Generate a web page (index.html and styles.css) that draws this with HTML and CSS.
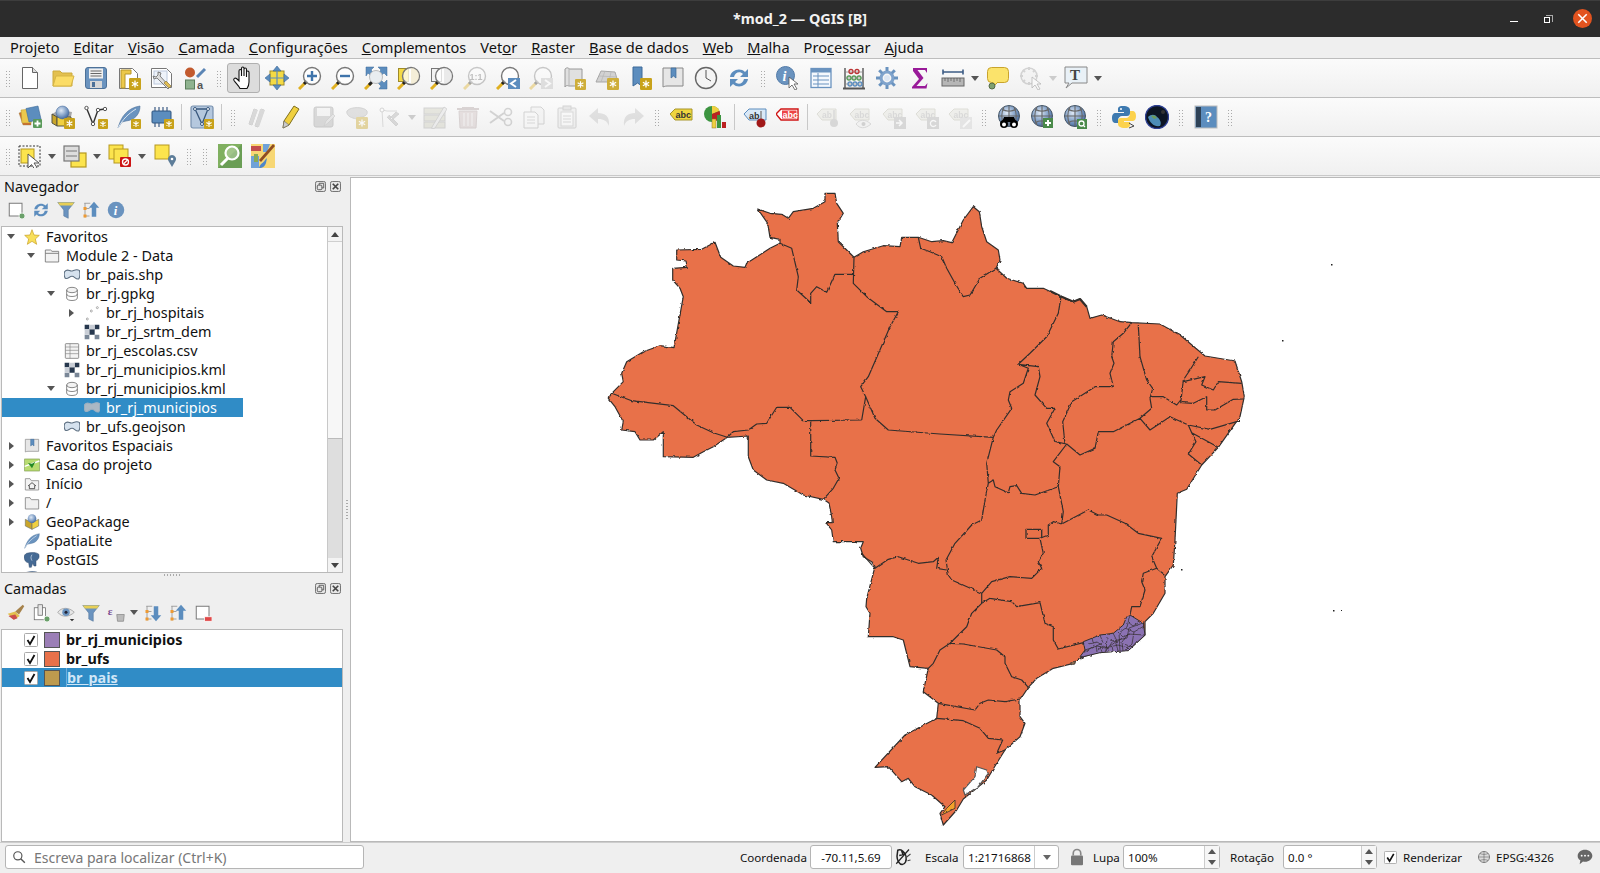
FILE: index.html
```html
<!DOCTYPE html>
<html lang="pt">
<head>
<meta charset="utf-8">
<title>*mod_2 — QGIS [B]</title>
<link rel="stylesheet" href="styles.css">
</head>
<body>
<svg class="defs" aria-hidden="true">
<defs>
<radialGradient id="gl" cx=".4" cy=".35" r=".7"><stop offset="0" stop-color="#dfe9f5"/><stop offset=".6" stop-color="#7d9cc4"/><stop offset="1" stop-color="#3d6299"/></radialGradient>
<filter id="rough" x="590" y="180" width="680" height="660" filterUnits="userSpaceOnUse"><feTurbulence type="fractalNoise" baseFrequency=".22" numOctaves="2" seed="4"/><feDisplacementMap in="SourceGraphic" scale="2.6" xChannelSelector="R" yChannelSelector="G"/></filter>
</defs>
<symbol id="bd" viewBox="0 0 10 10"><rect width="10" height="10" rx="1" fill="#c8a21a"/><path d="M5 2v6M2.4 3.5l5.2 3M2.4 6.5l5.2-3" stroke="#fff" stroke-width="1.1"/></symbol>
<symbol id="lens" viewBox="0 0 24 24"><path d="M1 23l7-7" stroke="#e0b020" stroke-width="3"/><path d="M6 18l3-3" stroke="#222" stroke-width="3"/><circle cx="14" cy="10" r="8.5" fill="#fff" fill-opacity=".75" stroke="#777" stroke-width="1.4"/></symbol>
<symbol id="new" viewBox="0 0 24 24"><path d="M4.5 1.5h10l5 5v16h-15z" fill="#fff" stroke="#666"/><path d="M14.5 1.5v5h5" fill="#ddd" stroke="#666"/></symbol>
<symbol id="open" viewBox="0 0 24 24"><path d="M2 20V5h7l2 2h10v13z" fill="#e3c04f" stroke="#cdaa3d"/><path d="M2 20l3-10h18l-3 10z" fill="#fbdc66" stroke="#d6b545"/></symbol>
<symbol id="save" viewBox="0 0 24 24"><rect x="1.5" y="1.5" width="21" height="21" rx="2.5" fill="#6a93bf" stroke="#4d7198"/><rect x="5" y="2.5" width="14" height="10" fill="#f0f0f0"/><path d="M6.5 5h11M6.5 7.5h11M6.5 10h11" stroke="#666"/><rect x="6" y="15" width="12" height="7" fill="#d8d8d8"/><rect x="8" y="16" width="3" height="5" fill="#4d7198"/></symbol>
<symbol id="layoutnew" viewBox="0 0 24 24"><path d="M2.5 2.5h13l5 5v15h-18z" fill="#fff" stroke="#777"/><path d="M4 4h10v4H8v14H4z" fill="#ecc94b" stroke="#b8962a"/><use href="#bd" x="12" y="12" width="12" height="12"/></symbol>
<symbol id="layoutmgr" viewBox="0 0 24 24"><path d="M1.5 2.5h15l5 5v14h-20z" fill="#fff" stroke="#777"/><rect x="4" y="5" width="13" height="13" fill="#eef3fa" stroke="#bcc8dc"/><path d="M8 6l3 1-1 3 10 11-2 2L7 12l-3 1-1-3 3 1 2-2z" fill="#ddd" stroke="#666" stroke-width=".8"/><path d="M14 17l5 5 2-2-5-5z" fill="#e2bd53" stroke="#8e7a3b" stroke-width=".7"/></symbol>
<symbol id="style" viewBox="0 0 24 24"><circle cx="7" cy="6.5" r="5" fill="#c25a2e"/><path d="M14 11L22 3" stroke="#5b85b5" stroke-width="3"/><rect x="2.5" y="14" width="9" height="9" fill="#8fb38f" stroke="#5a7d5a"/></symbol>
<symbol id="hand" viewBox="0 0 24 24"><path d="M8 22.5c-1-2.5-3.500-4.500-6-8-1-2 1-3 2.500-2l2.500 2.500V5c0-2 2.500-2 2.500 0v5V2.500c0-2 2.500-2 2.500 0V10V3.500c0-2 2.500-2 2.500 0V11V6.500c0-2 2.500-2 2.500 0V16c0 3-1 5-2 6.500z" fill="#fff" stroke="#111" stroke-width="1.100"/></symbol>
<symbol id="pan" viewBox="0 0 24 24"><rect x="5" y="5" width="14" height="14" fill="#f4da45" stroke="#9e8a2a"/><path d="M12 0l4 5H8zM12 24l-4-5h8zM0 12l5-4v8zM24 12l-5 4V8z" fill="#5c8dbe" stroke="#3d6a99" stroke-width=".6"/><path d="M12 5v14M5 12h14" stroke="#5c8dbe" stroke-width="1.200"/></symbol>
<symbol id="zin" viewBox="0 0 24 24"><use href="#lens"/><path d="M14 5v10M9 10h10" stroke="#3f74ab" stroke-width="2.400"/></symbol>
<symbol id="zout" viewBox="0 0 24 24"><use href="#lens"/><path d="M9 10h10" stroke="#3f74ab" stroke-width="2.400"/></symbol>
<symbol id="zfull" viewBox="0 0 24 24"><path d="M2 1h8L7 4l3 3-3 3-3-3-2 3zM23 1v9l-3-3-3 3-3-3 3-3-3-3zM23 23h-8l2-3-3-3 3-3 3 3 3-3z" fill="#5c8dbe" stroke="#3d6a99" stroke-width=".5"/><path d="M1 23l6-6" stroke="#e0b020" stroke-width="3"/><path d="M5 19l3-3" stroke="#222" stroke-width="3"/><circle cx="12" cy="11" r="6.500" fill="#e9edf0" stroke="#bbb"/></symbol>
<symbol id="zsel" viewBox="0 0 24 24"><rect x="1.500" y="2.500" width="10" height="13" fill="#f4da45" stroke="#9e8a2a"/><use href="#lens"/><path d="M14 2v16a8 8 0 0 0 0-16z" fill="#eee5c0" fill-opacity=".6"/></symbol>
<symbol id="zlay" viewBox="0 0 24 24"><rect x="1.500" y="2.500" width="10" height="13" fill="#f2f2f2" stroke="#777"/><use href="#lens"/><path d="M14 2v16a8 8 0 0 0 0-16z" fill="#ddd" fill-opacity=".6"/></symbol>
<symbol id="zlast" viewBox="0 0 24 24"><use href="#lens"/><rect x="12" y="12" width="12" height="11" fill="#5c8dbe"/><path d="M20 14l-5 3.500 5 3.500" fill="none" stroke="#fff" stroke-width="2"/></symbol>
<symbol id="znext" viewBox="0 0 24 24"><use href="#lens"/><rect x="12" y="12" width="12" height="11" fill="#bbb"/><path d="M16 14l5 3.500-5 3.500" fill="none" stroke="#fff" stroke-width="2"/></symbol>
<symbol id="map" viewBox="0 0 24 24"><path d="M3 3c2-2 4-1 4 0h13v17H7c-2-1-4 0-4 1z" fill="#ddd" stroke="#888"/><path d="M7 3v17" stroke="#aaa"/></symbol>
<symbol id="mapn" viewBox="0 0 24 24"><use href="#map"/><use href="#bd" x="13" y="13" width="11" height="11"/></symbol>
<symbol id="map3d" viewBox="0 0 24 24"><path d="M1 16L6 5l14 1 3 10z" fill="#ccc" stroke="#999"/><path d="M4 10l18 1M10 5l-4 11M16 6l-2 10" stroke="#aaa" stroke-width=".7"/><use href="#bd" x="12" y="12" width="12" height="12"/></symbol>
<symbol id="bmn" viewBox="0 0 24 24"><path d="M5 1h9v19l-4.500-3L5 20z" fill="#5c8dbe" stroke="#3d6a99"/><use href="#bd" x="12" y="12" width="12" height="12"/></symbol>
<symbol id="bms" viewBox="0 0 24 24"><path d="M2 2h20v18H6c-2 0-4 1-4 1z" fill="#e6e6e6" stroke="#888"/><path d="M10 2h5v10l-2.500-2L10 12z" fill="#5c8dbe" stroke="#3d6a99" stroke-width=".7"/></symbol>
<symbol id="clock" viewBox="0 0 24 24"><circle cx="12" cy="12" r="10.500" fill="#f4f4f4" stroke="#666" stroke-width="1.400"/><path d="M12 4v8l5 3" fill="none" stroke="#555"/></symbol>
<symbol id="refr" viewBox="0 0 24 24"><path d="M3 11C4 4 13 1 18 6l3-3v8h-8l3-3c-3-3-8-2-9 3z" fill="#5c8dbe"/><path d="M21 13c-1 7-10 10-15 5l-3 3v-8h8l-3 3c3 3 8 2 9-3z" fill="#5c8dbe"/></symbol>
<symbol id="ident" viewBox="0 0 24 24"><circle cx="9.500" cy="9.500" r="9" fill="#6a93bf" stroke="#527ba8"/></symbol>
<symbol id="cursor" viewBox="0 0 24 24"><path d="M13 11v11l3-3 3 5 2-1-3-5h4z" fill="#fff" stroke="#555" stroke-width=".8"/></symbol>
<symbol id="attr" viewBox="0 0 24 24"><rect x="2" y="2.500" width="20" height="19" fill="#f4f8fd" stroke="#6a93bf" stroke-width="1.300"/><rect x="2" y="2.500" width="20" height="4" fill="#6a93bf"/><path d="M4 10h16M4 14h16M4 18h16M9 7v14" stroke="#6a93bf"/></symbol>
<symbol id="calc" viewBox="0 0 24 24"><path d="M3 2v20M21 2v20" stroke="#555" stroke-width="1.400"/><path d="M1 22.500h22" stroke="#555" stroke-width="2"/><path d="M3 6h18M3 12h18M3 18h18" stroke="#888" stroke-width=".8"/><g fill="none" stroke-width="1.300"><g stroke="#b33"><circle cx="9" cy="5.500" r="2"/><circle cx="15" cy="5.500" r="2"/></g><g stroke="#5a9a5a"><circle cx="7" cy="12" r="2"/><circle cx="12" cy="12" r="2"/><circle cx="17" cy="12" r="2"/></g><g stroke="#5c8dbe"><circle cx="8" cy="18" r="2"/><circle cx="13" cy="18" r="2"/><circle cx="18" cy="18" r="2"/></g></g></symbol>
<symbol id="gear" viewBox="0 0 24 24"><circle cx="12" cy="12" r="6" fill="none" stroke="#7fa3cc" stroke-width="3.200"/><path d="M12 1v4M12 19v4M1 12h4M19 12h4M4.200 4.200l3 3M16.800 16.800l3 3M19.800 4.200l-3 3M7.200 16.800l-3 3" stroke="#6a93bf" stroke-width="3"/><circle cx="12" cy="12" r="3" fill="#dde7f3"/></symbol>
<symbol id="sigma" viewBox="0 0 24 24"><path d="M5 2h14v5l-2-3H9.500l6 8-7 8H17l2.500-3-1 5.500H4v-1.500l7-8-6-8z" fill="#991a99"/></symbol>
<symbol id="ruler" viewBox="0 0 24 24"><path d="M2 6h20M2 3.500v5M22 3.500v5" stroke="#3d5c85" stroke-width="1.600"/><rect x="1" y="12" width="22" height="8" fill="#b6b6b6" stroke="#666"/><path d="M4 12v3M7 12v4M10 12v3M13 12v4M16 12v3M19 12v4" stroke="#555" stroke-width=".7"/></symbol>
<symbol id="tip" viewBox="0 0 24 24"><rect x="1.500" y="1.500" width="21" height="15" rx="4" fill="#fbe36b" stroke="#c9a42c"/><path d="M7 16v5l5-5" fill="#fbe36b" stroke="#c9a42c"/><circle cx="6" cy="20" r="3" fill="#7fa070" stroke="#556b48"/></symbol>
<symbol id="maptip" viewBox="0 0 24 24"><circle cx="10" cy="10" r="8" fill="#eee" stroke="#999" stroke-width="1.500"/><path d="M10 1v3M10 16v3M1 10h3M16 10h3M4 4l2 2M14 14l2 2M16 4l-2 2M4 16l2-2" stroke="#999" stroke-width="2"/><use href="#cursor"/></symbol>
<symbol id="tbub" viewBox="0 0 24 24"><path d="M1 1h22v16H8l-6 5 3-5H1z" fill="#e9f1f7" stroke="#888"/></symbol>
<symbol id="dsm" viewBox="0 0 24 24"><path d="M1 8l12-4v16H5z" fill="#cd6a32" stroke="#984" stroke-width=".4"/><path d="M3 5l10-1v14H4z" fill="#ecc84c" stroke="#b8962a" stroke-width=".5"/><path d="M8 3.500L20 1l3 13-12 3z" fill="#5c8dbe" stroke="#3d6a99" stroke-width=".6"/><rect x="15" y="14" width="9" height="9" rx="1" fill="#5a9a5a"/><path d="M19.500 15.500v6M16.500 18.500h6" stroke="#fff" stroke-width="1.800"/></symbol>
<symbol id="gpkg" viewBox="0 0 24 24"><path d="M1 9l5 3v9l-5-3z" fill="#c9a52a" stroke="#554"/><path d="M6 12h14v9H6z" fill="#f0d040" stroke="#554"/><path d="M1 9l7-4 13 2-1 5H6z" fill="#333" fill-opacity=".4"/><circle cx="11.500" cy="7.500" r="6.500" fill="url(#gl)" stroke="#3d6299" stroke-width=".5"/><use href="#bd" x="13" y="13" width="11" height="11"/></symbol>
<symbol id="gpkg2" viewBox="0 0 24 24"><path d="M2 8l10 5v10l-10-5z" fill="#c9a52a" stroke="#776"/><path d="M12 13l10-5v10l-10 5z" fill="#f0d040" stroke="#776"/><circle cx="12" cy="7" r="6.500" fill="url(#gl)"/></symbol>
<symbol id="vshp" viewBox="0 0 24 24"><path d="M2.500 3L9 19l5-14 7-1" fill="none" stroke="#333" stroke-width="1.400"/><g fill="#fff" stroke="#555"><circle cx="2.500" cy="3" r="1.700"/><circle cx="9" cy="19" r="1.700"/><circle cx="14" cy="5" r="1.700"/><circle cx="21" cy="4" r="1.700"/></g><use href="#bd" x="14" y="14" width="10" height="10"/></symbol>
<symbol id="feath" viewBox="0 0 24 24"><path d="M1 23C4 12 10 3 23 1c0 8-5 14-14 15l-4 1z" fill="#6a93bf" stroke="#4d7198" stroke-width=".6"/><path d="M1 23C6 14 11 9 19 4" fill="none" stroke="#dbe6f2"/></symbol>
<symbol id="feathn" viewBox="0 0 24 24"><use href="#feath"/><use href="#bd" x="14" y="14" width="10" height="10"/></symbol>
<symbol id="chip" viewBox="0 0 24 24"><rect x="2" y="6" width="19" height="12" rx="1" fill="#5c8dbe" stroke="#2f557f"/><path d="M5 2v4M9 2v4M13 2v4M17 2v4M5 18v4M9 18v4" stroke="#3d5c85" stroke-width="1.200"/><use href="#bd" x="14" y="14" width="10" height="10"/></symbol>
<symbol id="virt" viewBox="0 0 24 24"><rect x="1" y="1" width="22" height="22" rx="2" fill="#b5c8de" stroke="#7790ae" stroke-width="1.200"/><path d="M5 4l7 15 6-15z" fill="none" stroke="#39587d" stroke-width="1.300"/><g fill="#fff" stroke="#39587d"><circle cx="5" cy="4" r="1.500"/><circle cx="18" cy="4" r="1.500"/><circle cx="12" cy="19" r="1.500"/></g><use href="#bd" x="14" y="14" width="10" height="10"/></symbol>
<symbol id="pens" viewBox="0 0 24 24"><path d="M3 19L8 4l3 1-5 15zM9 21l6-17 3 1-6 17z" fill="#aaa" stroke="#888"/><path d="M3 19L8 4l4 1-6 15zM9 21l5-17 5 1-6 17z" fill="#aaa"/></symbol>
<symbol id="pen" viewBox="0 0 24 24"><path d="M5 16L15 1l5 3L10 20l-6 3z" fill="#f0d040" stroke="#7f6f1c"/><path d="M4 23l1-7 5 4z" fill="#ccc" stroke="#666" stroke-width=".6"/></symbol>
<symbol id="saved" viewBox="0 0 24 24"><rect x="2" y="2" width="19" height="20" rx="2" fill="#aaa" stroke="#888"/><rect x="5" y="3" width="13" height="8" fill="#eee"/><path d="M12 21l2-5 7-7 2 2-7 7z" fill="#ccc" stroke="#888" stroke-width=".6"/></symbol>
<symbol id="delpoly" viewBox="0 0 24 24"><path d="M2 6c4-5 18-4 20 0 1 4-2 5-5 6-4 0-5 3-9 1C4 12 1 9 2 6z" fill="#bbb" stroke="#999"/><use href="#bd" x="11" y="12" width="12" height="12"/></symbol>
<symbol id="vtool" viewBox="0 0 24 24"><path d="M4 5l5 1h10M4 5l1 17" fill="none" stroke="#aaa"/><circle cx="4" cy="5" r="2" fill="#fff" stroke="#999"/><path d="M9 12l9 9 2-2-9-9M21 9l-7 6-2-2 6-6z" fill="#aaa" stroke="#888" stroke-width=".7"/></symbol>
<symbol id="editt" viewBox="0 0 24 24"><rect x="1" y="3" width="21" height="6" fill="#c9c9b6" stroke="#999"/><rect x="1" y="10" width="21" height="6" fill="#c9c9b6" stroke="#999"/><rect x="1" y="17" width="21" height="6" fill="#c9c9b6" stroke="#999"/><path d="M9 22L21 2l3 2L12 23l-3 1z" fill="#ddd" stroke="#888" stroke-width=".7"/></symbol>
<symbol id="trash" viewBox="0 0 24 24"><path d="M1 4h22M6 3h12" stroke="#a89898" stroke-width="2"/><path d="M3 6h18l-1 17H4z" fill="#c8b8b8" stroke="#a89898"/><path d="M8 8v13M12 8v13M16 8v13" stroke="#eee"/></symbol>
<symbol id="cut" viewBox="0 0 24 24"><path d="M1 6l14 10M1 18L15 8" stroke="#999" stroke-width="2"/><circle cx="19" cy="7" r="3.500" fill="none" stroke="#999" stroke-width="1.600"/><circle cx="19" cy="17" r="3.500" fill="none" stroke="#999" stroke-width="1.600"/></symbol>
<symbol id="copy" viewBox="0 0 24 24"><path d="M9 2h10l3 3v14H9z" fill="#eee" stroke="#999"/><path d="M2 7h11l3 3v13H2z" fill="#f8f8f8" stroke="#999"/><path d="M5 12h8M5 15h8M5 18h8" stroke="#aaa"/></symbol>
<symbol id="paste" viewBox="0 0 24 24"><rect x="3" y="3" width="18" height="20" rx="1" fill="#e5e5e5" stroke="#999"/><rect x="8" y="1" width="8" height="4" fill="#ccc" stroke="#999"/><rect x="6" y="7" width="12" height="14" fill="#fafafa" stroke="#aaa"/><path d="M8 11h8M8 14h8M8 17h8" stroke="#aaa"/></symbol>
<symbol id="undo" viewBox="0 0 24 24"><path d="M10 3v5c7 0 12 3 11 13-2-5-5-7-11-7v5L1 11z" fill="#bbb"/></symbol>
<symbol id="redo" viewBox="0 0 24 24"><path d="M14 3v5C7 8 2 11 3 21c2-5 5-7 11-7v5l9-8z" fill="#bbb"/></symbol>
<symbol id="lab" viewBox="0 0 24 24"><path d="M0 9l5-5h17v11H5z" fill="#efd53f" stroke="#a7952d"/></symbol>
<symbol id="pie" viewBox="0 0 24 24"><circle cx="9" cy="9" r="8" fill="#3c9440"/><path d="M9 9V1a8 8 0 0 1 7.500 5z" fill="#f0d040"/><path d="M9 9l7.500-3A8 8 0 0 1 9 17z" fill="#b22"/><rect x="9" y="14" width="4" height="9" fill="#f0d040" stroke="#873" stroke-width=".5"/><rect x="14" y="10" width="4" height="13" fill="#3c9440"/><rect x="19" y="17" width="4" height="6" fill="#b22"/></symbol>
<symbol id="labp" viewBox="0 0 24 24"><path d="M1 9l5-5h17v11H6z" fill="#d9e8f7" stroke="#5c8dbe"/><path d="M18 6v10" stroke="#888" stroke-width="1.500"/><circle cx="18" cy="18" r="4.500" fill="#a01818"/></symbol>
<symbol id="labr" viewBox="0 0 24 24"><path d="M0 9l5-5h17v11H5z" fill="#fff" stroke="#d01414" stroke-width="1.400"/><rect x="6" y="5.500" width="14.500" height="8" fill="#e44"/></symbol>
<symbol id="lgt" viewBox="0 0 24 24"><path d="M1 9l5-5h14v11H6z" fill="#e2e2d8" stroke="#b5b5a5"/></symbol>
<symbol id="lg1" viewBox="0 0 24 24"><use href="#lgt"/><path d="M18 5v11" stroke="#aaa" stroke-width="1.500"/><circle cx="18" cy="18" r="4" fill="#aaa"/></symbol>
<symbol id="lg2" viewBox="0 0 24 24"><use href="#lgt"/><path d="M7 19c4-5 9-5 15 0-6 5-11 5-15 0z" fill="#eee" stroke="#aaa"/><circle cx="14.500" cy="19" r="2" fill="#999"/></symbol>
<symbol id="lg3" viewBox="0 0 24 24"><use href="#lgt"/><rect x="12" y="12" width="12" height="12" fill="#aaa"/><path d="M14 18h5M17 15l3 3-3 3" fill="none" stroke="#fff" stroke-width="1.500"/></symbol>
<symbol id="lg4" viewBox="0 0 24 24"><use href="#lgt"/><rect x="12" y="12" width="12" height="12" fill="#aaa"/><path d="M21 17a3 3 0 1 0 0 3" fill="none" stroke="#fff" stroke-width="1.300"/></symbol>
<symbol id="lg5" viewBox="0 0 24 24"><use href="#lgt"/><rect x="12" y="12" width="12" height="12" fill="#ccc"/><path d="M15 22l7-7" stroke="#fff" stroke-width="2"/></symbol>
<symbol id="glob" viewBox="0 0 24 24"><circle cx="12" cy="11" r="10.500" fill="url(#gl)" stroke="#456"/><path d="M2 11h20M12 1v20M5 4c4 3 10 3 14 0M5 18c4-3 10-3 14 0M7 2c-3 6-3 12 0 18M17 2c3 6 3 12 0 18" fill="none" stroke="#666" stroke-width="1.100"/></symbol>
<symbol id="globb" viewBox="0 0 24 24"><use href="#glob"/><g fill="#000"><circle cx="7" cy="19" r="4"/><circle cx="17" cy="19" r="4"/><path d="M7 12h10l2 5H5z"/></g><circle cx="7" cy="19.500" r="2" fill="#fff"/><circle cx="17" cy="19.500" r="2" fill="#fff"/></symbol>
<symbol id="globa" viewBox="0 0 24 24"><use href="#glob"/><rect x="13" y="13" width="10" height="10" fill="#4a8a4a"/><path d="M18 15v6M15 18h6" stroke="#fff" stroke-width="2"/></symbol>
<symbol id="globs" viewBox="0 0 24 24"><use href="#glob"/><rect x="14" y="14" width="10" height="10" fill="#4a8a4a"/><circle cx="18.500" cy="18.500" r="2.500" fill="none" stroke="#fff" stroke-width="1.300"/><path d="M20 20l2 2" stroke="#fff" stroke-width="1.300"/></symbol>
<symbol id="py" viewBox="0 0 24 24"><path d="M11 1C6 1 6 3 6 5v2h6v1H4C1 8 0 10 0 13s1 5 4 5h2v-3c0-2 2-4 4-4h5c2 0 3-1 3-3V5c0-2-2-4-7-4z" fill="#3e7ab0"/><path d="M13 23c5 0 5-2 5-4v-2h-6v-1h8c3 0 4-2 4-5s-1-5-4-5h-2v3c0 2-2 4-4 4H9c-2 0-3 1-3 3v3c0 2 2 4 7 4z" fill="#fcd24c"/><circle cx="9" cy="4" r="1" fill="#fff"/><path d="M17 18l5 3-5 2" fill="none" stroke="#444"/></symbol>
<symbol id="earth" viewBox="0 0 24 24"><circle cx="12" cy="12" r="11.500" fill="#0c1524" stroke="#2d3f92" stroke-width="1.400"/><path d="M3 12c3-3 7-3 9 0 3 2 5 6 3 9-6 1-10-3-12-9z" fill="#4c8db6"/><path d="M6 11c3-1 5 0 6 2l-3 1z" fill="#6a9a5a"/><circle cx="18" cy="7" r="2" fill="#333"/></symbol>
<symbol id="helpb" viewBox="0 0 24 24"><rect x="1" y="1" width="22" height="22" fill="#5c8dbe" stroke="#bbb"/><rect x="2" y="2" width="5" height="20" fill="#2e4257"/></symbol>
<symbol id="sela" viewBox="0 0 24 24"><rect x="3" y="5" width="13" height="14" fill="#fce44d" stroke="#b59820"/><rect x="1" y="2" width="21" height="20" fill="none" stroke="#333" stroke-dasharray="2 1.500"/><path d="M10 10v14l3.500-3.500 3 4.500 2.500-1.500-3-4.500h5z" fill="#fff" stroke="#555"/></symbol>
<symbol id="selb" viewBox="0 0 24 24"><rect x="8" y="9" width="15" height="14" fill="#fce44d" stroke="#b59820" stroke-width="1.200"/><rect x="1" y="2" width="15" height="15" fill="#ddd" stroke="#777" stroke-width="1.200"/><path d="M3 7h11M3 12h11" stroke="#777"/></symbol>
<symbol id="selc" viewBox="0 0 24 24"><rect x="1" y="1" width="14" height="14" fill="#fce44d" stroke="#b59820"/><rect x="6" y="5" width="14" height="14" fill="#fce44d" stroke="#b59820"/><rect x="12" y="13" width="11" height="10" rx="1" fill="#cc1414"/><circle cx="17.500" cy="18" r="3" fill="none" stroke="#fff" stroke-width="1.300"/><path d="M15.500 20l4-4" stroke="#fff" stroke-width="1.300"/></symbol>
<symbol id="seld" viewBox="0 0 24 24"><rect x="2" y="1" width="14" height="14" fill="#fce44d" stroke="#b59820"/><path d="M19 23l-3.500-6a4 4 0 1 1 7 0z" fill="#5d7d99"/><circle cx="19" cy="15" r="1.300" fill="#fff"/></symbol>
<symbol id="search" viewBox="0 0 24 24"><rect width="24" height="24" fill="#80b060"/><path d="M0 24L24 0v24z" fill="#6a9e55"/><circle cx="14" cy="9" r="6.500" fill="#c3dcb3" fill-opacity=".5" stroke="#fff" stroke-width="2.200"/><path d="M3 21l7-7" stroke="#fff" stroke-width="3"/></symbol>
<symbol id="paint" viewBox="0 0 24 24"><rect width="24" height="24" fill="#f7d774"/><path d="M0 12h8v12H0zM12 0h7l-3 8h-4z" fill="#6fa2d8"/><path d="M0 2h10v5H0z" fill="#c24d4d"/><path d="M3 10h4v8H3z" fill="#8a5"/><path d="M8 24c2-6 4-4 6-8l2-2-1 5c-1 3-3 5-7 5z" fill="#4d86c9"/><path d="M10 18L24 2l-2-2L8 16z" fill="#8f4d22"/></symbol>
<symbol id="star" viewBox="0 0 24 24"><path d="M12 1l3 8 8 .500-6 5.500 2 8-7-4.500L5 23l2-8-6-5.500L9 9z" fill="#f8df5a" stroke="#c59c1d"/></symbol>
<symbol id="fdr" viewBox="0 0 24 24"><path d="M2 21V4h7l2 3h11v14z" fill="#f0f0f0" stroke="#888" stroke-width="1.300"/></symbol>
<symbol id="fdro" viewBox="0 0 24 24"><path d="M2 21V3h8l2 2h10v16z" fill="#f3f3f3" stroke="#777" stroke-width="1.300"/><path d="M2 8h20" stroke="#777" stroke-width="1.300"/></symbol>
<symbol id="poly" viewBox="0 0 24 24"><path d="M1 7c4-5 7-1 10-1s7-4 12-1c1 4 1 10-1 13-5 1-6-4-10-4s-6 5-10 3C0 14 0 10 1 7z" fill="#d6e2ee" stroke="#5d6f81" stroke-width="1.600"/></symbol>
<symbol id="polyw" viewBox="0 0 24 24"><path d="M1 7c4-5 7-1 10-1s7-4 12-1c1 4 1 10-1 13-5 1-6-4-10-4s-6 5-10 3C0 14 0 10 1 7z" fill="#aab8c4" stroke="#9db0c0" stroke-width="1.600"/></symbol>
<symbol id="db" viewBox="0 0 24 24"><ellipse cx="12" cy="6" rx="8" ry="4" fill="#f3f3f3" stroke="#777" stroke-width="1.300"/><path d="M4 6v12c0 5 16 5 16 0V6M4 12c0 5 16 5 16 0" fill="none" stroke="#777" stroke-width="1.300"/></symbol>
<symbol id="pts" viewBox="0 0 24 24"><g fill="#fff" stroke="#888"><circle cx="5" cy="21" r="1.500"/><circle cx="11" cy="9" r="1.500"/><circle cx="20" cy="4" r="1.500"/></g></symbol>
<symbol id="rast" viewBox="0 0 24 24"><rect x="1" y="1" width="22" height="22" fill="#fff"/><path d="M1 1h7v7H1zM16 1h7v7h-7zM8 8h8v8H8z" fill="#27384e"/><path d="M1 16h7v7H1zM16 16h7v7h-7z" fill="#7a8797"/><path d="M8 1h8v7H8zM1 8h7v8H1z" fill="#c9ced6"/></symbol>
<symbol id="tbl" viewBox="0 0 24 24"><rect x="2" y="1" width="20" height="22" rx="1" fill="#f3f3f3" stroke="#777" stroke-width="1.200"/><path d="M2 6h20M2 11h20M2 16h20M9 1v22" stroke="#888"/></symbol>
<symbol id="casa" viewBox="0 0 24 24"><rect x="1" y="3" width="22" height="18" fill="#b8dc70" stroke="#7f9a50"/><path d="M1 14L23 6" stroke="#fff" stroke-width="2"/><path d="M12 17L6 9l6 1 5-3z" fill="#248a24"/></symbol>
<symbol id="home" viewBox="0 0 24 24"><path d="M2 21V4h7l2 3h11v14z" fill="#f3f3f3" stroke="#888" stroke-width="1.200"/><path d="M6 15l6-5 6 5M8 14v5h8v-5" fill="none" stroke="#333" stroke-width="1.200"/></symbol>
<symbol id="eleph" viewBox="0 0 24 24"><path d="M4 2c6-2 14-2 18 1 2 6-1 9-4 10v8h-3l-2-4-2 6h-3l-1-7c-5 0-6-4-7-8 0-3 2-5 4-6z" fill="#456a94" stroke="#2f4a6b" stroke-width=".7"/><path d="M12 4c-2 3-2 6 0 9" stroke="#dbe6f2" fill="none"/></symbol>
<symbol id="sq" viewBox="0 0 24 24"><rect x="3" y="3" width="17" height="17" fill="#fff" stroke="#777" stroke-width="1.300"/></symbol>
<symbol id="addg" viewBox="0 0 24 24"><use href="#sq"/><circle cx="20" cy="20" r="4" fill="#6aa06a" stroke="#fff"/></symbol>
<symbol id="rm" viewBox="0 0 24 24"><use href="#sq"/><rect x="14" y="17" width="10" height="6" fill="#e04848" stroke="#fff"/></symbol>
<symbol id="filt" viewBox="0 0 24 24"><path d="M1 2h22l-8 10v11l-6-3v-8z" fill="#6a93bf" stroke="#4d7198" stroke-width=".7"/><path d="M1 2h22l-3 4H4z" fill="#e7cf57"/></symbol>
<symbol id="coll" viewBox="0 0 24 24"><path d="M3 3h8M4 3v19M4 10h6M4 20h6" stroke="#888" fill="none"/><rect x="2" y="8" width="4" height="4" fill="#ee9a33"/><rect x="2" y="18" width="4" height="4" fill="#ee9a33"/><path d="M16 1l7 8h-4v12h-6V9H9z" fill="#5c8dbe"/></symbol>
<symbol id="expa" viewBox="0 0 24 24"><path d="M3 3h8M4 3v19M4 10h6M4 20h6" stroke="#888" fill="none"/><rect x="2" y="8" width="4" height="4" fill="#ee9a33"/><rect x="2" y="18" width="4" height="4" fill="#ee9a33"/><path d="M16 23l7-8h-4V3h-6v12H9z" fill="#5c8dbe"/></symbol>
<symbol id="infob" viewBox="0 0 24 24"><circle cx="12" cy="12" r="11" fill="#6a93bf"/></symbol>
<symbol id="brush" viewBox="0 0 24 24"><path d="M1 13l10-3 6 6-8 5z" fill="#e3c04f"/><path d="M2 16l9-2 3 5-5 2z" fill="#cb4d4d"/><path d="M11 10L21 1l2 2-7 11z" fill="#a6824a"/></symbol>
<symbol id="addl" viewBox="0 0 24 24"><rect x="3" y="5" width="15" height="16" fill="#fff" stroke="#666"/><rect x="8" y="1" width="6" height="14" fill="#e8e8e8" stroke="#666"/><circle cx="20" cy="20" r="4" fill="#6aa06a" stroke="#fff"/></symbol>
<symbol id="eye" viewBox="0 0 24 24"><path d="M1 11C6 4 16 4 23 11 16 18 6 18 1 11z" fill="#e6e6e6" stroke="#999"/><circle cx="12" cy="11" r="5" fill="#6a93bf"/><circle cx="12" cy="11" r="2" fill="#223"/><path d="M17 20h6l-3 3z" fill="#333"/></symbol>
<symbol id="epsb" viewBox="0 0 24 24"><path d="M13 14h10l-1 9h-8z" fill="#bbb" stroke="#888"/></symbol>
<symbol id="mouse" viewBox="0 0 24 24"><path d="M5 3c4-2 10 2 11 8s-1 11-5 11-7-6-7-11zM7 10l8-2M10 3l2 6" fill="none" stroke="#222" stroke-width="2"/><path d="M20 2L3 21" stroke="#222" stroke-width="1.600"/><path d="M17 12l5-4M18 17l4-1" stroke="#444" stroke-width="1.400"/></symbol>
<symbol id="lock" viewBox="0 0 24 24"><rect x="4" y="10" width="16" height="13" rx="1.500" fill="#777"/><path d="M7 10V7a5 5 0 0 1 10 0v3" fill="none" stroke="#888" stroke-width="2.200"/></symbol>
<symbol id="crs" viewBox="0 0 24 24"><circle cx="12" cy="12" r="9.500" fill="#dcdcdc" stroke="#666" stroke-width="1.300"/><path d="M12 2v20M2 12h20M5 6c4 2 10 2 14 0M5 18c4-2 10-2 14 0" fill="none" stroke="#666"/></symbol>
<symbol id="msg" viewBox="0 0 24 24"><path d="M12 1c6 0 11 4 11 9s-5 9-11 9c-1 0-2 0-3-.300L4 23l1-6C2 15 1 13 1 10c0-5 5-9 11-9z" fill="#666"/><circle cx="7" cy="10" r="1.400" fill="#fff"/><circle cx="12" cy="10" r="1.400" fill="#fff"/><circle cx="17" cy="10" r="1.400" fill="#fff"/></symbol>
<symbol id="mag" viewBox="0 0 24 24"><circle cx="10" cy="10" r="7" fill="none" stroke="#555" stroke-width="2"/><path d="M15 15l7 7" stroke="#555" stroke-width="2.400"/></symbol>
<symbol id="float" viewBox="0 0 12 12"><rect x=".5" y=".5" width="11" height="11" rx="2" fill="#e6e6e6" stroke="#666"/><rect x="2.500" y="4.500" width="5" height="5" rx="1" fill="none" stroke="#555"/><path d="M4.500 4.500V2.500h5v5h-2" fill="none" stroke="#555"/></symbol>
<symbol id="closep" viewBox="0 0 12 12"><rect x=".5" y=".5" width="11" height="11" rx="2" fill="#e6e6e6" stroke="#666"/><path d="M3 3l6 6M9 3L3 9" stroke="#444" stroke-width="1.800"/></symbol>
<symbol id="chk" viewBox="0 0 14 14"><rect x=".5" y=".5" width="13" height="13" rx="1" fill="#fff" stroke="#aaa"/><path d="M3.500 7l2.500 4 4.500-8" fill="none" stroke="#111" stroke-width="1.800"/></symbol>
</svg>

<header class="title">
  <span class="title-text">*mod_2 — QGIS [B]</span>
  <span class="wc-min"></span><span class="wc-max"></span><span class="wc-close"><svg viewBox="0 0 18 18"><path d="M5 5l8 8M13 5l-8 8" stroke="#fff" stroke-width="1.500"/></svg></span>
</header>

<nav class="menu">
<span>Pro<u>j</u>eto</span><span><u>E</u>ditar</span><span><u>V</u>isão</span><span><u>C</u>amada</span><span><u>C</u>onfigurações</span><span><u>C</u>omplementos</span><span>Vet<u>o</u>r</span><span><u>R</u>aster</span><span><u>B</u>ase de dados</span><span><u>W</u>eb</span><span><u>M</u>alha</span><span>Pro<u>c</u>essar</span><span><u>A</u>juda</span>
</nav>

<div class="tb">
<i class="h first"></i>
<b><svg><use href="#new"/></svg></b><b><svg><use href="#open"/></svg></b><b><svg><use href="#save"/></svg></b><b><svg><use href="#layoutnew"/></svg></b><b><svg><use href="#layoutmgr"/></svg></b><b><svg viewBox="0 0 24 24"><use href="#style"/><text x="14" y="22.500" class="sv" font-size="11" fill="#555">a</text></svg></b>
<i class="h"></i>
<b class="on"><svg><use href="#hand"/></svg></b><b><svg><use href="#pan"/></svg></b><b><svg><use href="#zin"/></svg></b><b><svg><use href="#zout"/></svg></b><b><svg><use href="#zfull"/></svg></b><b><svg><use href="#zsel"/></svg></b><b><svg><use href="#zlay"/></svg></b><b class="off"><svg viewBox="0 0 24 24"><use href="#lens"/><text x="6.500" y="13.500" class="sv" font-weight="700" font-size="9" fill="#666">1:1</text></svg></b><b><svg><use href="#zlast"/></svg></b><b class="off"><svg><use href="#znext"/></svg></b><b class="dim"><svg><use href="#mapn"/></svg></b><b class="dim"><svg><use href="#map3d"/></svg></b><b><svg><use href="#bmn"/></svg></b><b><svg><use href="#bms"/></svg></b><b><svg><use href="#clock"/></svg></b><b><svg><use href="#refr"/></svg></b>
<i class="h"></i>
<b><svg viewBox="0 0 24 24"><use href="#ident"/><text x="6.500" y="15" class="ser" font-size="14" font-style="italic" font-weight="700" fill="#fff">i</text><use href="#cursor"/></svg></b><b><svg><use href="#attr"/></svg></b><b><svg><use href="#calc"/></svg></b><b><svg><use href="#gear"/></svg></b><b><svg><use href="#sigma"/></svg></b><b><svg><use href="#ruler"/></svg></b><em></em><b><svg><use href="#tip"/></svg></b><b class="off"><svg><use href="#maptip"/></svg></b><em class="off"></em><b><svg viewBox="0 0 24 24"><use href="#tbub"/><text x="6" y="14" class="ser" font-size="15" font-weight="700" fill="#444">T</text></svg></b><em></em>
</div>

<div class="tb">
<i class="h first"></i>
<b><svg><use href="#dsm"/></svg></b><b><svg><use href="#gpkg"/></svg></b><b><svg><use href="#vshp"/></svg></b><b><svg><use href="#feathn"/></svg></b><b><svg><use href="#chip"/></svg></b><s></s><b><svg><use href="#virt"/></svg></b><s></s>
<i class="h"></i>
<b class="off"><svg><use href="#pens"/></svg></b><b><svg><use href="#pen"/></svg></b><b class="off"><svg><use href="#saved"/></svg></b><b class="off"><svg><use href="#delpoly"/></svg></b><b class="off"><svg><use href="#vtool"/></svg></b><em class="off"></em><b class="off"><svg><use href="#editt"/></svg></b><b class="off"><svg><use href="#trash"/></svg></b><b class="off"><svg><use href="#cut"/></svg></b><b class="off"><svg><use href="#copy"/></svg></b><b class="off"><svg><use href="#paste"/></svg></b><b class="off"><svg><use href="#undo"/></svg></b><b class="off"><svg><use href="#redo"/></svg></b>
<i class="h"></i>
<b><svg viewBox="0 0 24 24"><use href="#lab"/><text x="5.500" y="13" class="sv" font-size="9" font-weight="700" fill="#333">abc</text></svg></b><b><svg><use href="#pie"/></svg></b><s></s><b><svg viewBox="0 0 24 24"><use href="#labp"/><text x="6" y="13.500" class="sv" font-size="9" font-weight="700" fill="#333">ab</text></svg></b><b><svg viewBox="0 0 24 24"><use href="#labr"/><text x="6.500" y="13" class="sv" font-size="9" font-weight="700" fill="#fff">abc</text></svg></b><s></s>
<b class="off"><svg viewBox="0 0 24 24"><use href="#lg1"/><text x="6" y="13" class="sv" font-size="8.500" font-weight="700" fill="#aaa">ab</text></svg></b><b class="off"><svg viewBox="0 0 24 24"><use href="#lg2"/><text x="5.500" y="13" class="sv" font-size="8.500" font-weight="700" fill="#aaa">abc</text></svg></b><b class="off"><svg viewBox="0 0 24 24"><use href="#lg3"/><text x="5.500" y="13" class="sv" font-size="8.500" font-weight="700" fill="#aaa">abc</text></svg></b><b class="off"><svg viewBox="0 0 24 24"><use href="#lg4"/><text x="5.500" y="13" class="sv" font-size="8.500" font-weight="700" fill="#aaa">abc</text></svg></b><b class="off"><svg viewBox="0 0 24 24"><use href="#lg5"/><text x="5.500" y="13" class="sv" font-size="8.500" font-weight="700" fill="#aaa">abc</text></svg></b>
<i class="h"></i>
<b><svg><use href="#globb"/></svg></b><b><svg><use href="#globa"/></svg></b><b><svg><use href="#globs"/></svg></b>
<i class="h"></i>
<b><svg><use href="#py"/></svg></b><b><svg><use href="#earth"/></svg></b>
<i class="h"></i>
<b><svg viewBox="0 0 24 24"><use href="#helpb"/><text x="11" y="17" class="ser" font-size="14" fill="#fff">?</text></svg></b>
<i class="h"></i>
</div>

<div class="tb">
<i class="h first"></i>
<b><svg><use href="#sela"/></svg></b><em></em><b><svg><use href="#selb"/></svg></b><em></em><b><svg><use href="#selc"/></svg></b><em></em><b><svg><use href="#seld"/></svg></b>
<i class="h"></i><i class="h"></i>
<b><svg><use href="#search"/></svg></b><b><svg><use href="#paint"/></svg></b>
</div>

<main class="main">
<aside class="side">
  <div class="ph"><span>Navegador</span><svg class="pb"><use href="#float"/></svg><svg class="pb"><use href="#closep"/></svg></div>
  <div class="pt"><b><svg><use href="#addg"/></svg></b><b><svg><use href="#refr"/></svg></b><b><svg><use href="#filt"/></svg></b><b><svg><use href="#coll"/></svg></b><b><svg viewBox="0 0 24 24"><use href="#infob"/><text x="9" y="18" class="ser" font-size="17" font-style="italic" font-weight="700" fill="#fff">i</text></svg></b></div>
  <div class="browser">
    <div class="tree">
      <div class="row l0"><i class="ar o"></i><svg><use href="#star"/></svg>Favoritos</div>
      <div class="row l1"><i class="ar o"></i><svg><use href="#fdro"/></svg>Module 2 - Data</div>
      <div class="row l2"><i class="ar"></i><svg><use href="#poly"/></svg>br_pais.shp</div>
      <div class="row l2"><i class="ar o"></i><svg><use href="#db"/></svg>br_rj.gpkg</div>
      <div class="row l3"><i class="ar c"></i><svg><use href="#pts"/></svg>br_rj_hospitais</div>
      <div class="row l3"><i class="ar"></i><svg><use href="#rast"/></svg>br_rj_srtm_dem</div>
      <div class="row l2"><i class="ar"></i><svg><use href="#tbl"/></svg>br_rj_escolas.csv</div>
      <div class="row l2"><i class="ar"></i><svg><use href="#rast"/></svg>br_rj_municipios.kml</div>
      <div class="row l2"><i class="ar o"></i><svg><use href="#db"/></svg>br_rj_municipios.kml</div>
      <div class="row l3 sel"><i class="ar"></i><svg><use href="#polyw"/></svg>br_rj_municipios</div>
      <div class="row l2"><i class="ar"></i><svg><use href="#poly"/></svg>br_ufs.geojson</div>
      <div class="row l0"><i class="ar c"></i><svg><use href="#bms"/></svg>Favoritos Espaciais</div>
      <div class="row l0"><i class="ar c"></i><svg><use href="#casa"/></svg>Casa do projeto</div>
      <div class="row l0"><i class="ar c"></i><svg><use href="#home"/></svg>Início</div>
      <div class="row l0"><i class="ar c"></i><svg><use href="#fdr"/></svg>/</div>
      <div class="row l0"><i class="ar c"></i><svg><use href="#gpkg2"/></svg>GeoPackage</div>
      <div class="row l0"><i class="ar"></i><svg><use href="#feath"/></svg>SpatiaLite</div>
      <div class="row l0"><i class="ar"></i><svg><use href="#eleph"/></svg>PostGIS</div>
      <div class="row l0"><i class="ar"></i><svg><use href="#eleph"/></svg></div>
    </div>
    <div class="sbar"><span class="sb-btn up"></span><span class="sb-thumb"></span><span class="sb-track"></span><span class="sb-btn down"></span></div>
  </div>
  <div class="grip"></div>
  <div class="ph ph2"><span>Camadas</span><svg class="pb"><use href="#float"/></svg><svg class="pb"><use href="#closep"/></svg></div>
  <div class="pt pt2"><b><svg><use href="#brush"/></svg></b><b><svg><use href="#addl"/></svg></b><b><svg><use href="#eye"/></svg></b><b><svg><use href="#filt"/></svg></b><b><svg viewBox="0 0 24 24"><use href="#epsb"/><text x="1" y="14" class="ser" font-size="15" fill="#7a4c91">ε</text></svg></b><em></em><b><svg><use href="#expa"/></svg></b><b><svg><use href="#coll"/></svg></b><b><svg><use href="#rm"/></svg></b></div>
  <div class="layers">
    <div class="lay"><svg class="cb"><use href="#chk"/></svg><span class="sw sw1"></span>br_rj_municipios</div>
    <div class="lay"><svg class="cb"><use href="#chk"/></svg><span class="sw sw2"></span>br_ufs</div>
    <div class="lay cur"><svg class="cb"><use href="#chk"/></svg><span class="sw sw3"></span><span class="lname">br_pais</span></div>
  </div>
</aside>
<div class="vgrip"></div>
<section class="canvas">
<svg class="mapview" viewBox="351 178 1249 663">
<g filter="url(#rough)" stroke="#332e2c" stroke-width="1.200" stroke-linejoin="round">
<path fill="#e8714a" d="M611.7 393.3L623.3 381.7 621.7 373.3 626.7 361.700 643.300 351.700 660 345.700 674 347.700 683.300 296.700 680 288.300 672.700 280 672.700 268.300 687.300 267.300 686 261 676.700 260 676.700 250 701.700 249.300 715 242.300 720.700 257.300 733.300 266 745 267.300 746.700 263.300 770 248.300 780 243.300 780 239.300 770 237.300 767.700 223.300 757.700 209 770 213.300 781.700 214.300 788.300 218.300 793.300 211.700 813.300 208.300 825 201.700 825 193.300 835 193.300 836.700 203.300 843.300 213.300 837.300 223.300 838.300 241.700 854 257.300 863.300 251.700 883.300 245.700 900 246.700 901.700 237.300 918.300 237.300 931.700 241.700 943.300 240.700 951.700 242.700 963.300 220 973.300 206.700 979.300 211.700 981.700 226.700 986.700 241.700 998.300 250 1000 260 996 268.300 1006.700 278.300 1023.300 283.300 1026.700 288.300 1043.300 288.300 1061.700 296.700 1073.300 301.700 1080 299 1086.700 306.700 1090 318.300 1101.700 315 1120 321.700 1131.700 322.700 1160 324 1180 335 1205 356 1235 361 1241.700 381.700 1244.300 396.700 1240 416.700 1218.300 447.300 1201.700 465 1186.700 489.300 1177.300 493.300 1176 520 1175 540 1173.300 565 1165 576.700 1165 593.300 1153.300 613.300 1145 621.700 1145 635 1128.300 650 1100 651.700 1083.300 656.700 1073.300 663.300 1053.300 668.300 1036.700 678.300 1028.300 687.300 1020 700 1020 716.700 1025 723.300 1020 736.700 1005 750 996.700 763.300 986.700 780 963.300 799 956.700 810 943.300 825 940 813.300 945 806.700 931.700 795 915 786.700 908.300 778.300 901.700 781.700 888.300 766.700 875 767.300 905 735 936.700 718.300 938.300 703.300 923.300 691.700 928.300 668.300 910 666.700 903.300 640 893.300 636.700 868.300 636.700 870 613.300 866 606.700 866.700 598.300 875 566.700 871.700 561.700 863.300 556.700 860.700 548.300 863.300 541.700 833.300 541.700 831.700 530 826 522.700 832.300 522.700 831.700 516.700 829 503 823.300 499.300 803.300 495 783.300 483.300 766.700 480 753.300 470 748.300 456.700 748.300 436 727.300 437.300 713.300 446.700 703.300 451.700 693.300 457.300 663.300 456.700 663.300 431.700 653.300 440 640 440 635 431.700 621.700 430 623.300 421.700 615 406.700 608.300 398.300z"/>
<path fill="#fff" stroke="#555" d="M976.700 766.700L986.700 770 988.300 773.300 978.300 786.700 965 795 963.300 790 975 776.700z"/>
<path fill="#f2a02a" stroke-width=".8" d="M955 800L955 808.300 948.300 811.700 941.700 815 946.700 808.300z"/>
<path fill="none" d="M611.700 393.300L631.700 400.700 673.300 405.700 696.700 425 713.300 432.700 727.300 437.300 733.300 431.700 748.300 430 756.700 424 766.700 423.300 776.700 407.300 790 407.300 803.300 420.700 810.700 420.700 810.700 456 835 457.300 837.300 463.300 835 470 839 478.300 833.300 488.300 823.300 499.300M810.700 420.700L861.700 420M898.300 311.700L890 326.700 868.300 376.700 860.700 386.700 865.700 396.700 861.700 420M865.700 396.700L875 418.300 888.300 430 940 434 993.300 437.300M780 243.300L791.700 248.300 798.300 276.700 796.700 290 810.700 302.700 810.700 293.300 816.700 286.700 826.700 292.300 835 274.300 853.300 274.300M854 257.300L853.300 283.300 866.700 296.700 886.700 311.700 898.300 311.700M918.300 237.300L920.700 248.300 930 251.700 941.700 256.700 946.700 268.300 955 283.300 963.300 296.700 970 295 980 278.300 996 268.300M1061 296.700L1058.300 313.300 1046.700 336.700 1030 353.300 1018.300 364.300M1018.300 364.300L1028.300 368.300 1023.300 383.300 1010 391.700 1008.300 400 1011.700 408.300 996.700 430 993.300 437.300 986.700 463.300 988.300 483.300M1018.300 364.300L1038.300 366.700 1040 376.700 1035 395 1046.700 408.300 1055 408.300 1046.700 423.300 1055 441.700 1066.700 444M1066.700 444L1053.300 461.700 1060 466.700 1058.300 486.700 1063.300 511.700 1061.700 524M988.300 483.300L993.300 480 995 486.700 1008.300 492.700 1010 486.700 1016.700 485.700 1021.700 493.300 1035 495 1058.300 486.700M988.300 483.300L985 500 981.700 520 971.700 525 955 543.300 946 560 948.300 575 951.700 580 981.700 593.300M861.700 553.300L875 568.300 888.300 559.300 898.300 556.700 918.300 563.300 933.300 561.700 938.300 557.300 936.700 568.300 946.700 570M1061.700 524L1053.300 521.700 1048.300 525 1048.300 535 1040 538.300 1043.300 553.300 1038.300 561.700 1041.700 568.300 1031.700 578.300 1010 576.700 991.700 581.700 981.700 593.300M1061.700 524L1088.300 510 1098.300 515 1106.700 515 1125 523.300 1138.300 533.300 1161.700 538.300 1151.700 556.700 1156.700 568.300 1165 575M1156.700 568.300L1143.300 573.300 1141.700 581.700 1145 590 1140 606.700 1131.700 606.700 1130 615M981.700 593.300L981.700 603.300 990 598.300 1011.700 601.700 1016.700 606.700 1040 602.700 1045 623.300 1053.300 626.700 1053.300 640 1058.300 649 1083.300 642.700M981.700 603.300L971.700 613.300 966.700 626.700 950 643.300 940 650 933.300 663.300 928.300 668.300M950 643.300L963.300 644 996.700 650 1005 656.700 1005 663.300 1011.700 676.700 1021.700 680 1028.300 687.300M938.300 703.300L975 710 980 703.300 988.300 700 1005 701.700 1020 699M936.700 718.300L963.300 720.700 980 728.300 988.300 738.300 1002.700 740 996.700 753.300 1005 750M1131.700 322.700L1123.300 333.300 1113.300 341.700 1111.700 356.700 1114 363.300 1110 373.300 1113.300 386.700 1095 386.700 1071.700 401.700 1062.700 421.700 1065 444M1138.300 325L1140 356.700 1146.700 380 1152.700 388.300 1150 398.300 1151.700 408.300 1140 418.300M1066.700 444L1080 455 1095 448.300 1098.300 431.700 1113.300 431.700 1140 418.300M1198.300 356.700L1190 370 1183.300 380 1180.700 403.300M1150 396.700L1163.300 396.700 1176.700 405 1180.700 400M1183.300 381.700L1205 376.700 1201.700 385 1213.300 390 1218.300 381.700 1241.700 383.300M1181.700 402.700L1193.300 403.300 1206.700 396.700 1206.700 410 1215 410 1233.300 399.300 1243.300 399M1140 418.300L1150 430 1170 416.700 1188.300 425 1210 429.300 1236.700 421.700 1240 421.700M1188.300 425L1191.700 432.700 1218.300 447.300M1191.700 432.700L1196 441.700 1188.300 454 1201.700 465"/>
<path fill="none" stroke-width="2.200" d="M1050 291L1061.700 296.700 1073.300 301.700 1080 299 1086.700 306.700"/>
<path fill="none" stroke-width="1.300" d="M1026 529.300h15.700v9H1026z"/>
<path fill="#8b72b3" stroke-width="1" d="M1130 615L1143.300 623.300 1145 635 1128.300 650.700 1100 652.700 1083.300 656.700 1080 656.700 1085 650 1083.300 641.700 1100 635 1113.300 633.300 1123.300 625 1126.700 616.700z"/>
<path fill="none" stroke-width=".7" d="M1130 615l-3 12-8 6 1 18M1143 623l-14 5-2 10-14 3-8 11M1145 635l-17-1-6 8 1 9M1100 635l3 8-7 3 1 6M1085 650l12-4 8 2 13-3 10 3M1113 633l4 8-7 5M1125 628l9 4 10-6M1134 632l-2 12-6 6M1092 638l2 8-9 6M1107 637l-1 14M1116 643l2 8M1088 644l9-2 5 3M1098 650l5-4 6 3M1110 640l7 2 5-4M1118 632l5 5 7-3M1128 622l5 4 5-3M1124 644l8 3 5-6M1100 646l2 6M1112 646l1 5"/>
<path fill="#8a6a50" stroke-width=".7" d="M1071 662l4-1 0 3-4 1z"/>
</g>
<g fill="#222"><rect x="1331" y="264" width="1.500" height="1.500"/><rect x="1282" y="340" width="1.500" height="1.500"/><rect x="1181" y="569" width="1.500" height="1.500"/><rect x="1333" y="610" width="1.500" height="1.500"/><rect x="1341" y="610" width="1" height="1"/></g>
</svg>
</section>
</main>

<footer class="status">
  <div class="loc"><svg><use href="#mag"/></svg><span>Escreva para localizar (Ctrl+K)</span></div>
  <span class="lb lb-coord">Coordenada</span><span class="inp ip-coord">-70.11,5.69</span><svg class="si si-mouse"><use href="#mouse"/></svg>
  <span class="lb lb-esc">Escala</span><span class="inp ip-esc">1:21716868<i class="drop"></i></span>
  <svg class="si si-lock"><use href="#lock"/></svg>
  <span class="lb lb-lupa">Lupa</span><span class="inp ip-lupa">100%<i class="spin"></i></span>
  <span class="lb lb-rot">Rotação</span><span class="inp ip-rot">0.0 °<i class="spin"></i></span>
  <svg class="si si-chk"><use href="#chk"/></svg><span class="lb lb-ren">Renderizar</span>
  <svg class="si si-crs"><use href="#crs"/></svg><span class="lb lb-eps">EPSG:4326</span><svg class="si si-msg"><use href="#msg"/></svg>
</footer>
</body>
</html>
```
FILE: styles.css
```css
* { box-sizing: border-box; }
html, body { margin: 0; padding: 0; }
body { width: 1600px; height: 873px; overflow: hidden; display: flex; flex-direction: column; background: #efefef; color: #111; font: 14px "Noto Sans", "Liberation Sans", sans-serif; }
.defs { display: block; width: 0; height: 0; flex: none; }
.sv { font-family: "Liberation Sans", sans-serif; }
.ser { font-family: "Liberation Serif", serif; }

.title { flex: none; height: 37px; background: #2c2c2c; border-top: 1px solid #3d3d3d; padding-bottom: 2px; display: flex; align-items: center; color: #f2f2f2; position: relative; }
.title-text { flex: 1; text-align: center; font-weight: 700; font-size: 14.4px; }
.wc-min { position: absolute; left: 1510px; top: 20px; width: 8px; height: 1px; background: #fff; }
.wc-max { position: absolute; left: 1544px; top: 16px; width: 6px; height: 6px; border: 1px solid #fff; }
.wc-max::after { content: ""; position: absolute; left: 1px; top: -3px; width: 6px; height: 6px; border-top: 1px solid #aaa; border-right: 1px solid #aaa; }
.wc-close { position: absolute; left: 1573px; top: 8px; width: 19px; height: 19px; border-radius: 50%; background: #e2531f; }
.wc-close svg { display: block; width: 19px; height: 19px; }

.menu { flex: none; height: 21px; padding-bottom: 2px; display: flex; align-items: center; background: #efefef; padding-left: 10px; gap: 14px; font-size: 14.6px; }
.menu span { white-space: nowrap; }

.tb { flex: none; height: 39px; display: flex; align-items: center; border-top: 1px solid #bdbdbd; background: linear-gradient(#fbfbfb, #f0f0f0); padding-left: 3px; }
.tb b { flex: none; width: 33px; height: 30px; display: flex; align-items: center; justify-content: center; border-radius: 3px; }
.tb b svg { width: 24px; height: 24px; display: block; }
.tb b.on { background: #dcdcdc; border: 1px solid #b0b0b0; }
.tb b.off svg { opacity: .38; }
.tb b.dim svg { opacity: .85; }
.tb em { flex: none; width: 12px; height: 30px; display: flex; align-items: center; justify-content: center; }
.tb em::after { content: ""; border: 4px solid transparent; border-top: 5px solid #555; border-bottom: 0; }
.tb em.off::after { border-top-color: #ccc; }
.tb i.h { flex: none; width: 16px; height: 18px; display: flex; align-items: center; justify-content: center; }
.tb i.h.first { width: 10px; }
.tb i.h::after { content: ""; width: 6px; height: 17px; background-image: radial-gradient(circle, #aaa 0.8px, transparent 1px); background-size: 3px 3px; }
.tb s { flex: none; width: 7px; height: 26px; display: flex; justify-content: center; }
.tb s::after { content: ""; width: 1px; background: #c8c8c8; }

.main { flex: 1; min-height: 0; display: flex; border-top: 1px solid #c9c9c9; }
.side { flex: none; width: 343px; display: flex; flex-direction: column; }
.vgrip { flex: none; width: 7px; display: flex; align-items: center; justify-content: center; }
.vgrip::after { content: ""; width: 2px; height: 20px; background-image: radial-gradient(circle, #aaa .7px, transparent 1px); background-size: 2px 3px; }
.canvas { flex: 1; min-width: 0; background: #fff; border: 1px solid #b9b9b9; border-right: 0; margin-top: 1px; }
.mapview { display: block; width: 100%; height: 100%; }

.ph { flex: none; height: 20px; display: flex; align-items: center; padding: 0 2px 0 4px; font-size: 14.4px; }
.ph span { flex: 1; }
.pb { width: 11px; height: 11px; margin-left: 4px; flex: none; }
.pt { flex: none; height: 28px; margin-bottom: 2px; padding-left: 3px; display: flex; align-items: center; }
.pt b { flex: none; width: 25px; display: flex; justify-content: center; }
.pt b svg { width: 18px; height: 18px; display: block; }
.pt em { flex: none; width: 12px; display: flex; justify-content: center; }
.pt em::after { content: ""; border: 4px solid transparent; border-top: 5px solid #555; border-bottom: 0; }
.browser { flex: none; height: 347px; margin-left: 1px; display: flex; background: #fff; border: 1px solid #b9b9b9; }
.tree { flex: 1; min-width: 0; overflow: hidden; }
.row { height: 19px; display: flex; align-items: center; white-space: nowrap; font-size: 14.4px; }
.row svg { width: 16px; height: 16px; flex: none; margin: 0 6px; }
.ar { flex: none; width: 14px; height: 19px; display: flex; align-items: center; justify-content: center; }
.ar.o::after { content: ""; border: 4px solid transparent; border-top: 5px solid #555; border-bottom: 0; }
.ar.c::after { content: ""; border: 4px solid transparent; border-left: 5px solid #555; border-right: 0; }
.l0 { padding-left: 2px; } .l1 { padding-left: 22px; } .l2 { padding-left: 42px; } .l3 { padding-left: 62px; }
.sel { width: 241px; background: #308cc6; color: #fff; }
.sbar { flex: none; width: 15px; display: flex; flex-direction: column; border-left: 1px solid #c8c8c8; background: #f4f4f4; }
.sb-btn { flex: none; height: 14px; display: flex; align-items: center; justify-content: center; background: #f3f3f3; }
.sb-btn.up::after { content: ""; border: 4px solid transparent; border-bottom: 5px solid #444; border-top: 0; }
.sb-btn.down::after { content: ""; border: 4px solid transparent; border-top: 5px solid #444; border-bottom: 0; }
.sb-thumb { flex: none; height: 198px; background: #f7f7f7; border-top: 1px solid #cfcfcf; border-bottom: 1px solid #bbb; }
.sb-track { flex: 1; background: #dedede; }
.grip { flex: none; height: 5px; display: flex; justify-content: center; }
.grip::after { content: ""; width: 18px; height: 2px; margin-top: 1px; background-image: radial-gradient(circle, #aaa .7px, transparent 1px); background-size: 3px 2px; }
.ph2 { height: 21px; }
.pt2 { height: 30px; margin-bottom: 0; padding-bottom: 3px; }
.layers { flex: 1; min-height: 0; margin-left: 1px; background: #fff; border: 1px solid #b9b9b9; }
.lay { height: 19px; display: flex; align-items: center; font-weight: 700; font-size: 14.4px; padding-left: 22px; }
.cb { width: 14px; height: 14px; flex: none; }
.sw { width: 16px; height: 16px; flex: none; margin: 0 6px; border: 1px solid #555; }
.sw1 { background: #9b7eb6; } .sw2 { background: #e8714a; } .sw3 { background: #bd9a4e; }
.cur { background: #308cc6; }
.lname { color: #cfe6f7; text-decoration: underline; border-left: 1px solid #6fb0dc; }

.status { flex: none; height: 31px; padding-bottom: 2px; display: flex; align-items: center; font-size: 11.6px; border-top: 1px solid #cdcdcd; }
.loc { flex: none; width: 359px; height: 24px; margin-left: 5px; background: #fff; border: 1px solid #b5b5b5; border-radius: 3px; display: flex; align-items: center; color: #777; font-size: 14px; padding-left: 6px; }
.loc svg { width: 14px; height: 14px; margin-right: 8px; flex: none; }
.lb { flex: none; white-space: nowrap; }
.inp { flex: none; height: 24px; background: #fff; border: 1px solid #b5b5b5; border-radius: 3px; display: flex; align-items: center; padding-left: 4px; position: relative; }
.lb-coord { margin-left: 376px; width: 70px; }
.ip-coord { width: 82px; justify-content: center; padding: 0; }
.si { flex: none; width: 14px; height: 16px; }
.si-mouse { margin-left: 2px; width: 18px; height: 18px; }
.lb-esc { margin-left: 13px; width: 38px; }
.ip-esc { width: 96px; }
.si-lock { margin-left: 9px; width: 18px; height: 18px; }
.lb-lupa { margin-left: 7px; width: 30px; }
.ip-lupa { width: 97px; }
.lb-rot { margin-left: 10px; width: 53px; }
.ip-rot { width: 94px; }
.si-chk { margin-left: 7px; width: 13px; height: 13px; }
.lb-ren { margin-left: 6px; width: 74px; }
.si-crs { width: 14px; height: 14px; }
.lb-eps { margin-left: 5px; width: 81px; }
.si-msg { width: 16px; height: 16px; }
.drop { position: absolute; right: 0; top: 0; bottom: 0; width: 24px; border-left: 1px solid #ccc; display: flex; align-items: center; justify-content: center; }
.drop::after { content: ""; border: 4px solid transparent; border-top: 5px solid #666; border-bottom: 0; }
.spin { position: absolute; right: 0; top: 0; bottom: 0; width: 15px; border-left: 1px solid #ccc; background: linear-gradient(#f6f6f6 49%, #bbb 49%, #bbb 51%, #f6f6f6 51%); }
.spin::before { content: ""; position: absolute; left: 3px; top: 3px; border: 4px solid transparent; border-bottom: 5px solid #555; border-top: 0; }
.spin::after { content: ""; position: absolute; left: 3px; bottom: 3px; border: 4px solid transparent; border-top: 5px solid #555; border-bottom: 0; }
```
